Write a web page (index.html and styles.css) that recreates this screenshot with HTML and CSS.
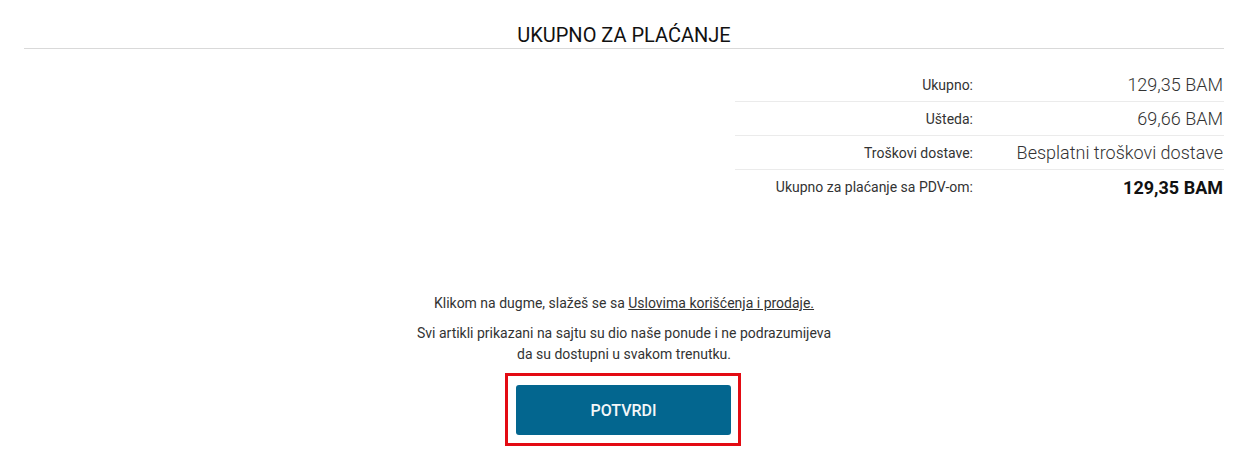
FILE: index.html
```html
<!DOCTYPE html>
<html lang="bs">
<head>
    <meta charset="UTF-8">
    <meta name="viewport" content="width=device-width, initial-scale=1.0">
    <title>Ukupno za plaćanje</title>
    <link rel="stylesheet" href="styles.css">
</head>
<body>
    <div class="checkout">
        <h2 class="section-title">UKUPNO ZA PLAĆANJE</h2>

        <div class="totals">
            <div class="totals-row">
                <span class="label">Ukupno:</span>
                <span class="value">129,35 BAM</span>
            </div>
            <div class="totals-row">
                <span class="label">Ušteda:</span>
                <span class="value">69,66 BAM</span>
            </div>
            <div class="totals-row">
                <span class="label">Troškovi dostave:</span>
                <span class="value">Besplatni troškovi dostave</span>
            </div>
            <div class="totals-row total">
                <span class="label">Ukupno za plaćanje sa PDV-om:</span>
                <span class="value">129,35 BAM</span>
            </div>
        </div>

        <div class="confirm">
            <p class="terms">Klikom na dugme, slažeš se sa <a href="#">Uslovima korišćenja i prodaje.</a></p>
            <p class="notice">Svi artikli prikazani na sajtu su dio naše ponude i ne podrazumijeva<br>da su dostupni u svakom trenutku.</p>
            <div class="highlight">
                <button class="btn-confirm" type="button">POTVRDI</button>
            </div>
        </div>
    </div>
</body>
</html>
```

FILE: styles.css
```css
body {
    margin: 0;
    font-family: Roboto, "Liberation Sans", Arial, sans-serif;
    color: #333;
    background: #fff;
}
.checkout {
    padding: 0 27px 0 24px;
}
.section-title {
    margin: 0;
    padding-top: 22px;
    height: 26px;
    font-size: 20px;
    font-weight: 400;
    line-height: 26px;
    color: #111;
    text-align: center;
    border-bottom: 1px solid #d9d9d9;
}
.totals {
    width: 489px;
    margin: 19px 0 0 auto;
}
.totals-row {
    display: grid;
    grid-template-columns: 1fr 250px;
    height: 34px;
    align-items: center;
    border-bottom: 1px solid #ebebeb;
    box-sizing: border-box;
}
.totals-row.total {
    border-bottom: none;
}
.label {
    font-size: 14px;
    text-align: right;
    padding-right: 1px;
}
.value {
    font-size: 18px;
    font-weight: 300;
    text-align: right;
    padding-right: 1px;
}
.total .value {
    font-weight: 700;
    color: #111;
}
.confirm {
    margin-top: 89px;
    text-align: center;
    font-size: 14px;
    line-height: 21px;
}
.terms {
    margin: 0 0 9px;
}
.terms a {
    color: #333;
    text-decoration: underline;
}
.notice {
    margin: 0 0 8px;
}
.highlight {
    display: inline-block;
    margin-right: 2px;
    border: 3px solid #e30b13;
    padding: 9px 7px 8px 8px;
}
.btn-confirm {
    display: block;
    width: 215px;
    height: 50px;
    border: none;
    border-radius: 3px;
    background: #03668f;
    color: #f4f7f9;
    font-family: inherit;
    font-size: 16px;
    font-weight: 500;
    cursor: pointer;
}
```
